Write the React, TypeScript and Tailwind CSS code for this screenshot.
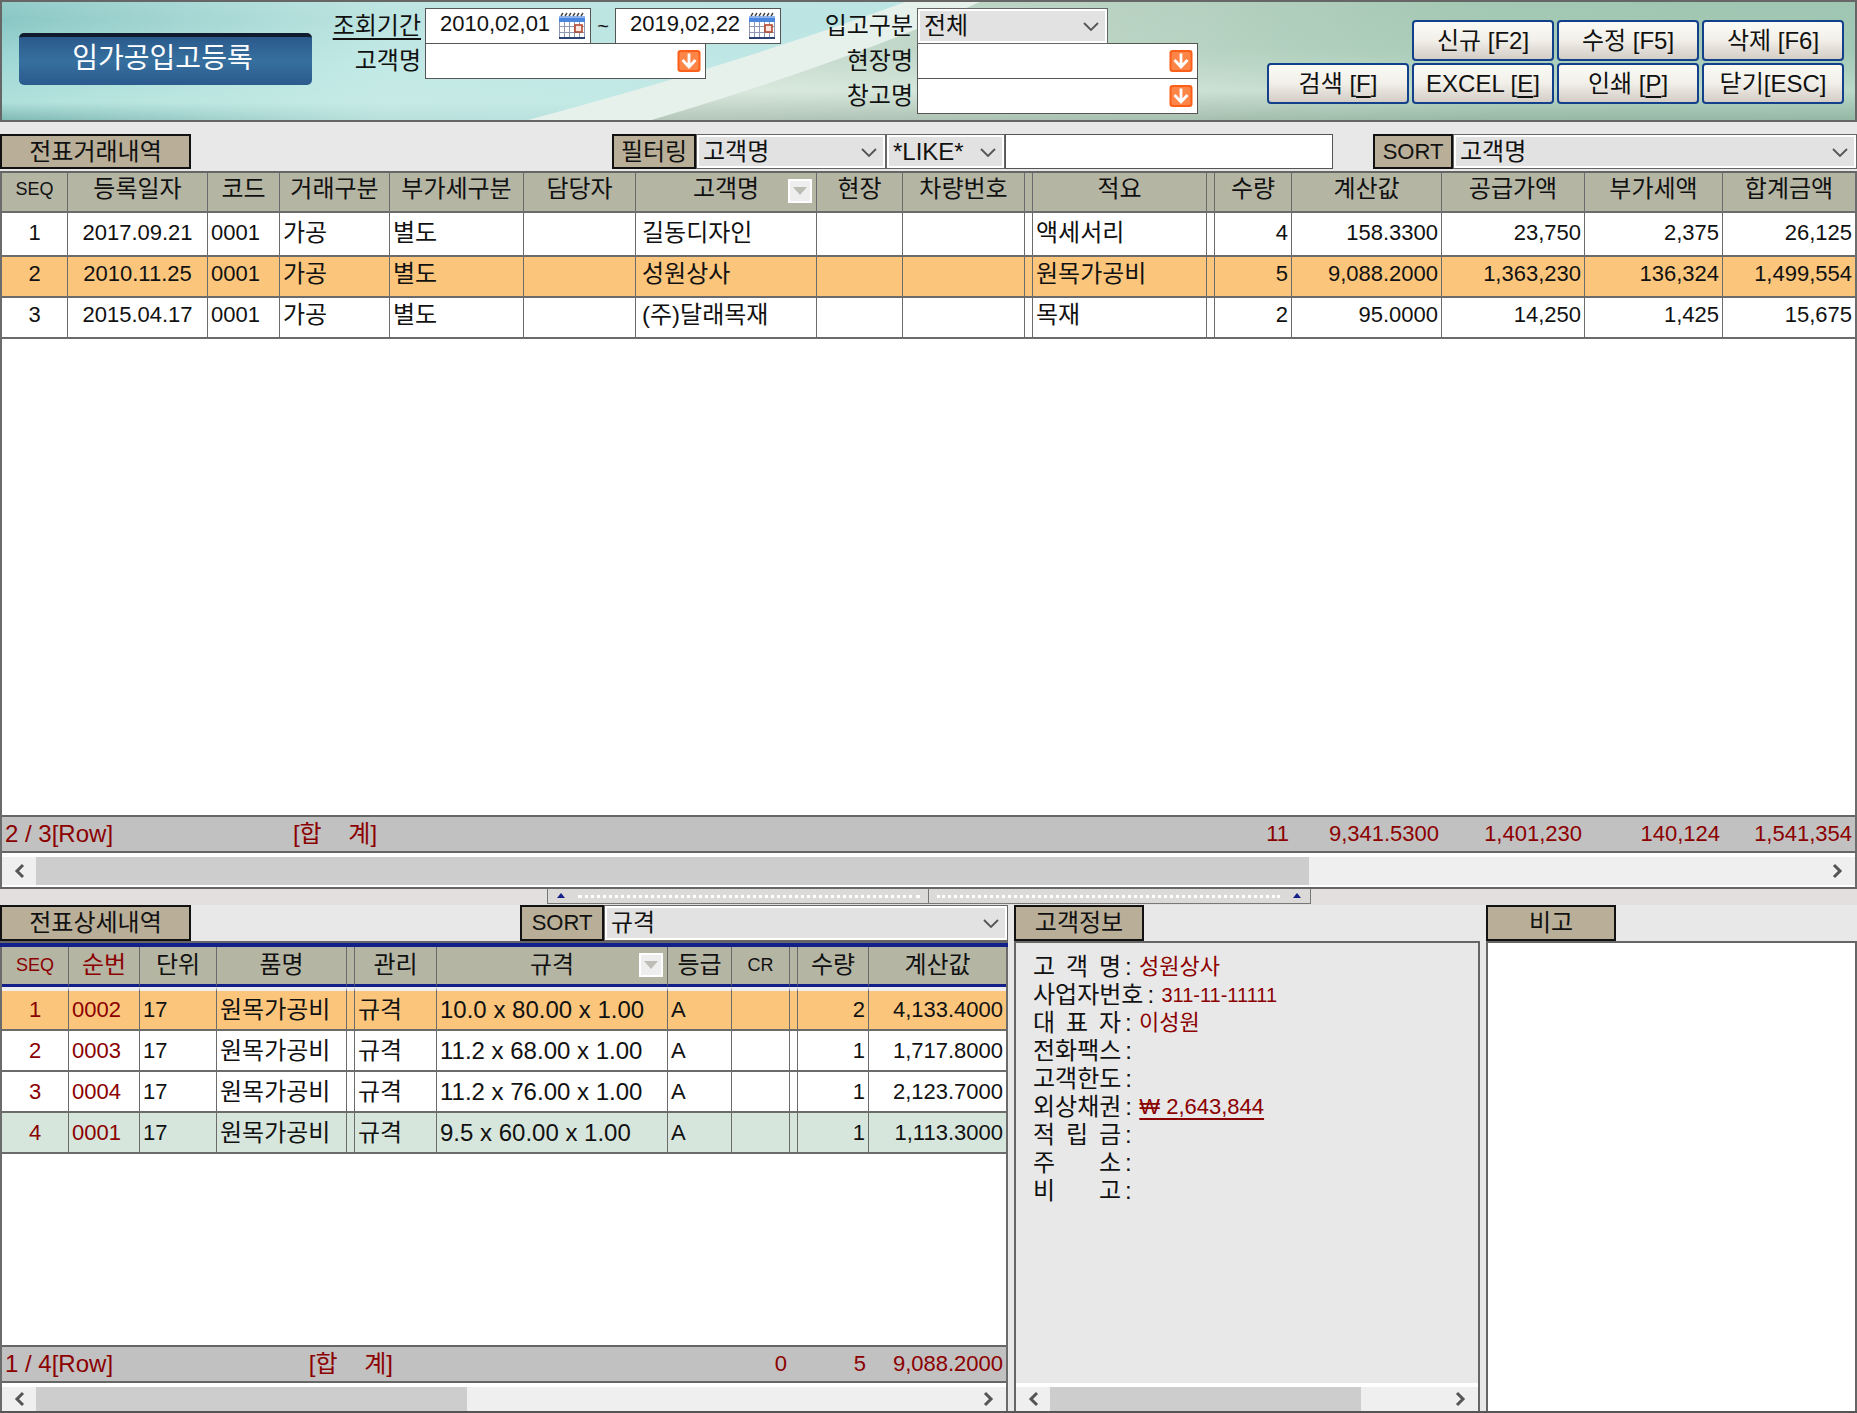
import type { ReactNode } from 'react';
import clsx from 'clsx';

type Align = 'left' | 'center' | 'right';

interface Column {
  title: string;
  width?: number;
  align?: Align;
  latin?: boolean;
  red?: boolean;
  filter?: boolean;
  cellClass?: string;
}

interface FootCell {
  text: string;
  span?: number;
  align?: Align;
  className?: string;
}

const alignClass: Record<Align, string> = {
  left: 'text-left',
  center: 'text-center',
  right: 'text-right',
};

const slipColumns: Column[] = [
  { title: 'SEQ', width: 66, align: 'center', latin: true, cellClass: 'text-[22px]' },
  { title: '등록일자', width: 140, align: 'center', cellClass: 'text-[22px]' },
  { title: '코드', width: 72, cellClass: 'text-[22px]' },
  { title: '거래구분', width: 110 },
  { title: '부가세구분', width: 134 },
  { title: '담당자', width: 112 },
  { title: '고객명', width: 181, filter: true, cellClass: 'pl-1.5' },
  { title: '현장', width: 86 },
  { title: '차량번호', width: 122 },
  { title: '', width: 8 },
  { title: '적요', width: 174 },
  { title: '', width: 8 },
  { title: '수량', width: 77, align: 'right', cellClass: 'text-[22px]' },
  { title: '계산값', width: 150, align: 'right', cellClass: 'text-[22px]' },
  { title: '공급가액', width: 143, align: 'right', cellClass: 'text-[22px]' },
  { title: '부가세액', width: 138, align: 'right', cellClass: 'text-[22px]' },
  { title: '합계금액', align: 'right', cellClass: 'text-[22px]' },
];

const slipRows = [
  ['1', '2017.09.21', '0001', '가공', '별도', '', '길동디자인', '', '', '', '액세서리', '', '4', '158.3300', '23,750', '2,375', '26,125'],
  ['2', '2010.11.25', '0001', '가공', '별도', '', '성원상사', '', '', '', '원목가공비', '', '5', '9,088.2000', '1,363,230', '136,324', '1,499,554'],
  ['3', '2015.04.17', '0001', '가공', '별도', '', '(주)달래목재', '', '', '', '목재', '', '2', '95.0000', '14,250', '1,425', '15,675'],
];

const slipFoot: FootCell[] = [
  { text: '2 / 3[Row]', span: 3 },
  { text: '[합    계]', align: 'center' },
  { text: '', span: 8 },
  { text: '11', align: 'right', className: 'text-[22px]' },
  { text: '9,341.5300', align: 'right', className: 'text-[22px]' },
  { text: '1,401,230', align: 'right', className: 'text-[22px]' },
  { text: '140,124', align: 'right', className: 'text-[22px]' },
  { text: '1,541,354', align: 'right', className: 'text-[22px]' },
];

const detailColumns: Column[] = [
  { title: 'SEQ', width: 67, align: 'center', latin: true, red: true, cellClass: 'text-[22px]' },
  { title: '순번', width: 71, red: true, cellClass: 'text-[22px]' },
  { title: '단위', width: 77, cellClass: 'text-[22px]' },
  { title: '품명', width: 130 },
  { title: '', width: 8 },
  { title: '관리', width: 82 },
  { title: '규격', width: 231, filter: true },
  { title: '등급', width: 64, cellClass: 'text-[22px]' },
  { title: 'CR', width: 58, latin: true },
  { title: '', width: 8 },
  { title: '수량', width: 71, align: 'right', cellClass: 'text-[22px]' },
  { title: '계산값', align: 'right', cellClass: 'text-[22px]' },
];

const detailRows = [
  ['1', '0002', '17', '원목가공비', '', '규격', '10.0 x 80.00 x 1.00', 'A', '', '', '2', '4,133.4000'],
  ['2', '0003', '17', '원목가공비', '', '규격', '11.2 x 68.00 x 1.00', 'A', '', '', '1', '1,717.8000'],
  ['3', '0004', '17', '원목가공비', '', '규격', '11.2 x 76.00 x 1.00', 'A', '', '', '1', '2,123.7000'],
  ['4', '0001', '17', '원목가공비', '', '규격', '9.5 x 60.00 x 1.00', 'A', '', '', '1', '1,113.3000'],
];

const detailFoot: FootCell[] = [
  { text: '1 / 4[Row]', span: 3 },
  { text: '[합    계]', span: 3, align: 'right', className: 'pr-11' },
  { text: '', span: 2 },
  { text: '0', align: 'right', className: 'text-[22px]' },
  { text: '' },
  { text: '5', align: 'right', className: 'text-[22px]' },
  { text: '9,088.2000', align: 'right', className: 'text-[22px]' },
];

function HeaderBackground() {
  return (
    <svg className="absolute inset-0 h-full w-full" viewBox="0 0 1857 120" preserveAspectRatio="none" aria-hidden="true">
      <defs>
        <linearGradient id="teal" x1="0" y1="0" x2="0" y2="1">
          <stop offset="0" stopColor="#93cbc9" />
          <stop offset="0.15" stopColor="#8ac7c4" />
          <stop offset="0.5" stopColor="#a0d8d6" />
          <stop offset="0.85" stopColor="#b0e0da" />
          <stop offset="1" stopColor="#7fb9b5" />
        </linearGradient>
        <linearGradient id="tealLight" x1="0" y1="0" x2="1" y2="0">
          <stop offset="0" stopColor="#d6f3ee" stopOpacity="0" />
          <stop offset="0.4" stopColor="#cdeeea" stopOpacity="0.75" />
          <stop offset="1" stopColor="#bfe7e6" stopOpacity="0.9" />
        </linearGradient>
        <linearGradient id="green" x1="0" y1="0" x2="1" y2="0">
          <stop offset="0" stopColor="#e2ebe2" />
          <stop offset="0.45" stopColor="#c6dccd" />
          <stop offset="0.7" stopColor="#abcfba" />
          <stop offset="1" stopColor="#a5cdb9" />
        </linearGradient>
        <linearGradient id="shade" x1="0" y1="0" x2="0" y2="1">
          <stop offset="0" stopColor="#8fb5a0" stopOpacity="0.3" />
          <stop offset="0.4" stopColor="#9dc2ae" stopOpacity="0.35" />
          <stop offset="0.75" stopColor="#d6e9dd" stopOpacity="0.45" />
          <stop offset="1" stopColor="#7f9c8a" stopOpacity="0.45" />
        </linearGradient>
      </defs>
      <rect width="1857" height="120" fill="url(#teal)" />
      <rect width="960" height="120" fill="url(#tealLight)" />
      <path d="M527 120 Q740 62 905 0 H1857 V120 Z" fill="#e6f1ec" />
      <path d="M651 120 Q850 60 980 0 H1857 V120 Z" fill="url(#green)" />
      <path d="M651 120 Q850 60 980 0 H1857 V120 Z" fill="url(#shade)" />
    </svg>
  );
}

function CalendarIcon() {
  return (
    <svg className="h-7 w-7" viewBox="0 0 28 28" aria-hidden="true">
      <rect x="1" y="4" width="26" height="23" fill="#fff" />
      <rect x="1" y="4" width="26" height="6" fill="#4a86e0" />
      <rect x="1" y="4" width="26" height="2" fill="#8fb4ee" />
      <path d="M3 4l2-3M7 4l2-3M11 4l2-3M15 4l2-3M19 4l2-3M23 4l2-3" stroke="#444" strokeWidth="1.4" />
      <path d="M1.5 10v16M6.5 10v16M11.5 10v16M16.5 10v16M21.5 10v16M26.5 10v16M1 14.5h26M1 20.5h26" stroke="#8e97b3" strokeWidth="1" />
      <rect x="1" y="25" width="26" height="2" fill="#2c4272" />
      <rect x="17" y="13" width="7" height="7" fill="#fbe5de" stroke="#b5492f" strokeWidth="1.6" />
    </svg>
  );
}

function DownIcon() {
  return (
    <svg className="h-6 w-6" viewBox="0 0 24 24" aria-hidden="true">
      <rect x="0.5" y="1" width="23" height="22" rx="3" fill="#fb5f1a" />
      <rect x="2.5" y="3" width="19" height="18" rx="1.5" fill="#fd8548" />
      <path d="M12 4.5v13M5.5 11l6.5 7 6.5-7" fill="none" stroke="#fff" strokeWidth="2.8" />
    </svg>
  );
}

function Tag({ children, className, htmlFor }: { children: ReactNode; className?: string; htmlFor?: string }) {
  const style = clsx(
    'flex shrink-0 items-center justify-center border-2 border-[#111] bg-[#b9ae97] whitespace-nowrap',
    className
  );
  return htmlFor ? (
    <label htmlFor={htmlFor} className={style}>{children}</label>
  ) : (
    <h2 className={style}>{children}</h2>
  );
}

function Select({ id, label, options, className }: { id: string; label?: string; options: string[]; className?: string }) {
  return (
    <div className={clsx('relative border border-[#666] bg-white p-[2px]', className)}>
      <select id={id} aria-label={label} className="block h-full w-full appearance-none bg-[#e2e2e2] pl-1 leading-7 outline-none">
        {options.map((o) => (
          <option key={o}>{o}</option>
        ))}
      </select>
      <svg className="pointer-events-none absolute top-1/2 right-2 h-4 w-4 -translate-y-1/2" viewBox="0 0 16 16" aria-hidden="true">
        <path d="M1 5l7 7 7-7" fill="none" stroke="#555" strokeWidth="1.8" />
      </svg>
    </div>
  );
}

function DateBox({ label, id, value }: { label?: string; id: string; value: string }) {
  return (
    <div className="flex h-9 w-[166px] items-center justify-between border border-[#555] bg-white pr-1">
      <input id={id} aria-label={label} defaultValue={value} className="h-full w-[130px] pb-1 pl-3.5 text-[22px] outline-none" />
      <button type="button" aria-label="달력"><CalendarIcon /></button>
    </div>
  );
}

function LookupBox({ id }: { id: string }) {
  return (
    <div className="flex h-9 w-[281px] items-center border border-[#555] bg-white pr-1">
      <input id={id} className="h-full min-w-0 flex-1 px-1 outline-none" />
      <button type="button" aria-label="찾기"><DownIcon /></button>
    </div>
  );
}

function ActionButton({ label, hotkey, underline }: { label: string; hotkey: string; underline?: boolean }) {
  return (
    <button
      type="button"
      className="h-[41px] w-[142px] rounded-[4px] border-2 border-[#12408a] bg-linear-to-b from-[#fbfbf6] via-[#f1efe8] to-[#d3cdc6] leading-8 whitespace-nowrap"
    >
      {label}[{underline ? <u className="underline-offset-4">{hotkey}</u> : hotkey}]
    </button>
  );
}

function ScrollBar({ thumb, className }: { thumb: string; className: string }) {
  return (
    <div className={clsx('flex shrink-0 border-t-4 border-white bg-[#efefef]', className)}>
      <button type="button" aria-label="왼쪽" className="flex w-[34px] shrink-0 items-center justify-center">
        <svg className="h-4 w-3" viewBox="0 0 12 16" aria-hidden="true">
          <path d="M10 2L4 8l6 6" fill="none" stroke="#555" strokeWidth="3" />
        </svg>
      </button>
      <div className="flex-1">
        <div className="h-full bg-[#cdcdcd]" style={{ width: thumb }} />
      </div>
      <button type="button" aria-label="오른쪽" className="flex w-[34px] shrink-0 items-center justify-center">
        <svg className="h-4 w-3" viewBox="0 0 12 16" aria-hidden="true">
          <path d="M2 2l6 6-6 6" fill="none" stroke="#555" strokeWidth="3" />
        </svg>
      </button>
    </div>
  );
}

function Cols({ columns }: { columns: Column[] }) {
  return (
    <colgroup>
      {columns.map((c, i) => (
        <col key={i} style={c.width ? { width: c.width } : undefined} />
      ))}
    </colgroup>
  );
}

interface GridProps {
  columns: Column[];
  rows: string[][];
  foot: FootCell[];
  selected: number;
  detail?: boolean;
  thumb: string;
}

function DataGrid({ columns, rows, foot, selected, detail, thumb }: GridProps) {
  return (
    <div className="flex flex-1 flex-col border-x-2 border-x-[#6b6b6b] bg-white">
      <table className="w-full table-fixed border-separate border-spacing-0">
        <Cols columns={columns} />
        <thead>
          <tr>
            {columns.map((c, i) => (
              <th
                key={i}
                className={clsx(
                  'relative border-r border-r-[#6b6b6b] bg-[#b5b5a4] font-normal leading-8 whitespace-nowrap last:border-r-0',
                  detail ? 'h-10 border-b-3 border-b-[#14208a] pb-0.5' : 'h-10 border-b-2 border-b-[#6b6b6b] pb-1.5',
                  c.latin && 'text-[18px]',
                  c.red && 'text-[#8b0000]'
                )}
              >
                {c.title}
                {c.filter && (
                  <button type="button" aria-label="필터" className="absolute top-1.5 right-1 flex h-6 w-6 items-center justify-center border-2 border-white bg-[#eee]">
                    <svg className="h-3 w-3.5" viewBox="0 0 14 12" aria-hidden="true">
                      <path d="M0 2h14L7 10z" fill="#bdbdb5" />
                    </svg>
                  </button>
                )}
              </th>
            ))}
          </tr>
        </thead>
        <tbody>
          {rows.map((row, r) => (
            <tr
              key={r}
              className={clsx(
                r === selected && 'bg-[#fbc67c]',
                detail && r === 3 && 'bg-[#d7e6dc]'
              )}
            >
              {row.map((cell, i) => {
                const col = columns[i];
                return (
                  <td
                    key={i}
                    className={clsx(
                      'border-r border-b-2 border-r-[#6b6b6b] border-b-[#6b6b6b] px-[3px] leading-8 whitespace-nowrap last:border-r-0',
                      r === 0 ? 'h-11' : 'h-[41px]',
                      detail && r === 0 && 'border-t-4 border-t-[#eee]',
                      !detail && (r === 0 ? 'pb-0.5' : 'pb-1.5'),
                      alignClass[col.align ?? 'left'],
                      col.cellClass,
                      col.red && 'text-[#8b0000]'
                    )}
                  >
                    {cell}
                  </td>
                );
              })}
            </tr>
          ))}
        </tbody>
      </table>
      <div className="flex-1" />
      <table className="w-full table-fixed border-separate border-spacing-0 bg-[#c1c1c1] text-[#8b0000]">
        <Cols columns={columns} />
        <tbody>
          <tr>
            {foot.map((f, i) => (
              <td
                key={i}
                colSpan={f.span ?? 1}
                className={clsx(
                  'h-[38px] border-y-2 border-y-[#666] px-[3px] leading-8 whitespace-pre',
                  alignClass[f.align ?? 'left'],
                  f.className
                )}
              >
                {f.text}
              </td>
            ))}
          </tr>
        </tbody>
      </table>
      <ScrollBar thumb={thumb} className={detail ? 'h-7' : 'h-[34px] border-b-2'} />
    </div>
  );
}

function InfoRow({ label, children }: { label: string; children?: ReactNode }) {
  return (
    <div className="flex h-7 items-center">
      <dt className="flex">
        <span className="min-w-[88px] [text-align-last:justify]">{label}</span>
        <span className="w-4 pl-1">:</span>
      </dt>
      <dd className="pl-0.5 text-[22px] text-[#8b0000]">{children}</dd>
    </div>
  );
}

function Grip({ flip }: { flip?: boolean }) {
  return (
    <div className={clsx('flex flex-1 items-center gap-3 px-2', flip && 'flex-row-reverse')}>
      <svg className="h-2 w-2.5" viewBox="0 0 10 8" aria-hidden="true">
        <path d="M5 1l4 5H1z" fill="#14208a" />
      </svg>
      <div className="flex-1 border-t-3 border-dotted border-white" />
    </div>
  );
}

export default function App() {
  return (
    <div className="flex min-h-screen flex-col bg-[#e8e8e8] font-['Liberation_Sans','Noto_Sans_CJK_KR',sans-serif] text-[24px] leading-7 text-[#111]">
      <header className="relative h-[122px] border-2 border-[#666]">
        <HeaderBackground />
        <div className="relative flex pt-1.5">
          <h1 className="mt-[25px] ml-[17px] flex h-[52px] w-[293px] items-center justify-center rounded-[5px] border-t-4 border-[#101c2c] bg-linear-to-b from-[#2b5a8c] via-[#36709f] to-[#2c5a8e] pr-1.5 pb-1 text-[28px] text-white">
            임가공입고등록
          </h1>
          <div className="ml-[15px] grid grid-cols-[94px_auto] grid-rows-[35px_35px] gap-x-1">
            <label htmlFor="from" className="pt-1 text-right underline underline-offset-4">조회기간</label>
            <div className="flex">
              <DateBox id="from" value="2010,02,01" />
              <span className="w-6 pt-1 text-center text-[20px]">~</span>
              <DateBox id="to" label="종료일" value="2019,02,22" />
            </div>
            <label htmlFor="customer" className="pt-1 text-right">고객명</label>
            <LookupBox id="customer" />
          </div>
          <div className="ml-8 grid grid-cols-[100px_auto] grid-rows-[35px_35px_35px] gap-x-1">
            <label htmlFor="kind" className="pt-1 text-right">입고구분</label>
            <Select id="kind" options={['전체']} className="h-9 w-[191px]" />
            <label htmlFor="site" className="pt-1 text-right">현장명</label>
            <LookupBox id="site" />
            <label htmlFor="store" className="pt-1 text-right">창고명</label>
            <LookupBox id="store" />
          </div>
          <div className="mt-3 mr-[11px] ml-auto flex flex-col items-end gap-0.5">
            <div className="flex gap-[3px]">
              <ActionButton label="신규 " hotkey="F2" />
              <ActionButton label="수정 " hotkey="F5" />
              <ActionButton label="삭제 " hotkey="F6" />
            </div>
            <div className="flex gap-[3px]">
              <ActionButton label="검색 " hotkey="F" underline />
              <ActionButton label="EXCEL " hotkey="E" underline />
              <ActionButton label="인쇄 " hotkey="P" underline />
              <ActionButton label="닫기" hotkey="ESC" />
            </div>
          </div>
        </div>
      </header>

      <section className="flex grow-[755] basis-0 flex-col pt-3">
        <div className="flex h-[37px] pb-[2px]">
          <Tag className="w-[191px]">전표거래내역</Tag>
          <div className="flex-1" />
          <Tag htmlFor="filterColumn" className="w-[84px]">필터링</Tag>
          <Select id="filterColumn" options={['고객명']} className="w-[190px]" />
          <Select id="operator" label="조건" options={['*LIKE*']} className="w-[119px]" />
          <input aria-label="필터 값" className="w-[328px] border border-[#555] bg-white px-1" />
          <Tag htmlFor="slipSort" className="ml-10 w-20 text-[22px]">SORT</Tag>
          <Select id="slipSort" options={['고객명']} className="w-[404px]" />
        </div>
        <div className="flex flex-1 flex-col border-y-2 border-[#666]">
          <DataGrid columns={slipColumns} rows={slipRows} foot={slipFoot} selected={1} thumb="71.3%" />
        </div>
      </section>

      <div className="h-4 bg-[#e3dfde]">
        <div className="mx-auto flex h-[15px] w-[764px] items-center border border-t-0 border-[#777] bg-[#dcdad8]">
          <Grip />
          <div className="h-full w-px bg-[#777]" />
          <Grip flip />
        </div>
      </div>

      <main className="grid grow-[506] basis-0 grid-cols-[1008fr_466fr_371fr] gap-x-1.5 border-b-2 border-[#555]">
        <section className="flex flex-col">
          <div className="flex h-[38px] border-b-2 border-[#666]">
            <Tag className="w-[191px]">전표상세내역</Tag>
            <div className="flex-1" />
            <Tag htmlFor="detailSort" className="w-[84px] text-[22px]">SORT</Tag>
            <Select id="detailSort" options={['규격']} className="w-[404px]" />
          </div>
          <div className="flex flex-1 flex-col border-t-4 border-[#14208a]">
            <DataGrid columns={detailColumns} rows={detailRows} foot={detailFoot} selected={0} detail thumb="46%" />
          </div>
        </section>

        <section className="flex flex-col">
          <Tag className="h-9 w-[130px]">고객정보</Tag>
          <div className="flex flex-1 flex-col border-x-2 border-t-2 border-[#666]">
            <dl className="flex-1 px-[17px] pt-2.5">
              <InfoRow label="고 객 명">성원상사</InfoRow>
              <InfoRow label="사업자번호">
                <span className="text-[20px]">311-11-11111</span>
              </InfoRow>
              <InfoRow label="대 표 자">이성원</InfoRow>
              <InfoRow label="전화팩스" />
              <InfoRow label="고객한도" />
              <InfoRow label="외상채권">
                <a href="#receivable" className="underline underline-offset-4">₩ 2,643,844</a>
              </InfoRow>
              <InfoRow label="적 립 금" />
              <InfoRow label="주 소" />
              <InfoRow label="비 고" />
            </dl>
            <ScrollBar thumb="79%" className="h-7" />
          </div>
        </section>

        <section className="flex flex-col">
          <Tag htmlFor="memo" className="h-9 w-[130px]">비고</Tag>
          <textarea id="memo" className="w-full flex-1 resize-none border-2 border-b-0 border-[#666] bg-white p-2 outline-none" />
        </section>
      </main>
    </div>
  );
}
